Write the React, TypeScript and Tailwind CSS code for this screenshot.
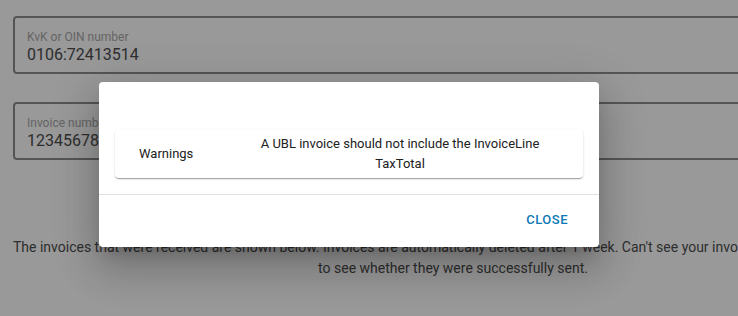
import React from 'react';

function OutlinedField({ label, value }: { label: string; value: string }) {
	return (
		<div className="border-2 border-[#8e8e8e] rounded-[4px] pl-[12px] pt-[12px] pb-[7px]">
			<div className="text-[12px] leading-[14px] text-[#a8a8a8]">{label}</div>
			<div className="text-[16px] leading-[20px] mt-[1px] text-[#4d4d4d]">{value}</div>
		</div>
	);
}

function WarningsDialog() {
	return (
		<div className="absolute left-[99px] top-[82px] w-[500px] bg-white rounded-[4px] shadow-[0px_11px_15px_-7px_rgba(0,0,0,0.2),0px_24px_38px_3px_rgba(0,0,0,0.14),0px_9px_46px_8px_rgba(0,0,0,0.12)]">
			<div className="h-[48px]" />
			<div className="px-4 pb-4">
				<div className="flex items-center h-[48px] rounded-[4px] bg-white shadow-[0px_2px_1px_-1px_rgba(0,0,0,0.2),0px_1px_1px_0px_rgba(0,0,0,0.14),0px_1px_3px_0px_rgba(0,0,0,0.12)] text-[13px] leading-[20px] text-[#212121]">
					<div className="w-[125px] pl-6">Warnings</div>
					<div className="w-[320px] text-center">
						A UBL invoice should not include the InvoiceLine TaxTotal
					</div>
				</div>
			</div>
			<div className="h-px bg-[#e0e0e0]" />
			<div className="flex justify-end items-center h-[52px] pr-[23px] pb-[2px]">
				<button className="px-2 py-1.5 text-[13px] font-medium tracking-[0.5px] text-[#0a79b6] uppercase">
					Close
				</button>
			</div>
		</div>
	);
}

export default function App() {
	return (
		<div className="relative w-[738px] h-[316px] overflow-hidden bg-white font-['Roboto',sans-serif]">
			<div className="ml-[13px] w-[880px] pt-[16px]">
				<OutlinedField label="KvK or OIN number" value="0106:72413514" />
				<div className="mt-[28px]">
					<OutlinedField label="Invoice number" value="1234567890" />
				</div>
				<p className="mt-[77px] text-sm leading-[21px] text-center text-[#4d4d4d] whitespace-nowrap">
					The invoices that were received are shown below. Invoices are automatically deleted after 1 week. Can't see your invoice? Check the outbox list
					<br />
					to see whether they were successfully sent.
				</p>
			</div>
			<div className="absolute inset-0 bg-black/40" />
			<WarningsDialog />
		</div>
	);
}
